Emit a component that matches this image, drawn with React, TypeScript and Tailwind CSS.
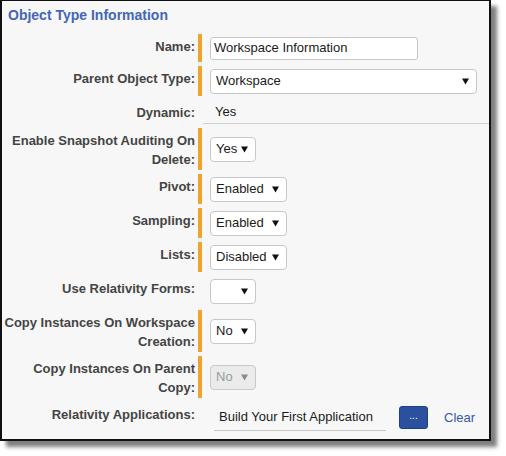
const font = { fontFamily: '"Liberation Sans", Arial, sans-serif' };

type Row = {
  label: string[];
  required: boolean;
  h: string;
  control: React.ReactNode;
};

function Caret({ disabled }: { disabled?: boolean }) {
  return (
    <svg width="7" height="7" viewBox="0 0 7 7" className="shrink-0">
      <path d="M0 0.5 L7 0.5 L3.5 6.5 Z" fill={disabled ? '#8a8a8a' : '#111'} />
    </svg>
  );
}

function Select({ value, width, disabled }: { value: string; width: string; disabled?: boolean }) {
  return (
    <div
      className={`${width} h-[25px] flex items-center justify-between pl-[5px] pr-[7px] rounded-[4px] border border-[#c8c8c8] text-[13px] ${
        disabled ? 'bg-[#ebebeb] text-[#9a9a9a]' : 'bg-white text-[#1a1a1a]'
      }`}
    >
      <span>{value}</span>
      <Caret disabled={disabled} />
    </div>
  );
}

const rows: Row[] = [
  {
    label: ['Name:'],
    required: true,
    h: 'h-[28px]',
    control: (
      <div className="w-[208px] h-[23px] flex items-center pl-[3px] rounded-[3px] border border-[#c8c8c8] bg-white text-[13px] text-[#1a1a1a]">
        Workspace Information
      </div>
    ),
  },
  { label: ['Parent Object Type:'], required: true, h: 'h-[30px]', control: <Select value="Workspace" width="w-[267px]" /> },
  {
    label: ['Dynamic:'],
    required: false,
    h: 'h-[24px]',
    control: <span className="pl-[4px] text-[13px] text-[#1a1a1a]">Yes</span>,
  },
  {
    label: ['Enable Snapshot Auditing On', 'Delete:'],
    required: true,
    h: 'h-[42px]',
    control: <Select value="Yes" width="w-[46px]" />,
  },
  { label: ['Pivot:'], required: true, h: 'h-[30px]', control: <Select value="Enabled" width="w-[77px]" /> },
  { label: ['Sampling:'], required: true, h: 'h-[30px]', control: <Select value="Enabled" width="w-[77px]" /> },
  { label: ['Lists:'], required: true, h: 'h-[30px]', control: <Select value="Disabled" width="w-[77px]" /> },
  { label: ['Use Relativity Forms:'], required: false, h: 'h-[30px]', control: <Select value="" width="w-[46px]" /> },
  {
    label: ['Copy Instances On Workspace', 'Creation:'],
    required: true,
    h: 'h-[42px]',
    control: <Select value="No" width="w-[46px]" />,
  },
  {
    label: ['Copy Instances On Parent', 'Copy:'],
    required: true,
    h: 'h-[42px]',
    control: <Select value="No" width="w-[46px]" disabled />,
  },
  {
    label: ['Relativity Applications:'],
    required: false,
    h: 'h-[31px]',
    control: (
      <div className="flex items-center">
        <div className="ml-[4px] w-[172px] h-[27px] flex items-center pl-[5px] border-b border-[#c8c8c8] text-[13px] text-[#1a1a1a]">
          Build Your First Application
        </div>
        <button className="ml-[13px] w-[29px] h-[23px] rounded-[3px] bg-[#2b50a0] border border-[#1f3f85] text-white text-[10px] leading-none pb-[3px]">
          ...
        </button>
        <span className="ml-[16px] text-[13px] text-[#3558a8]">Clear</span>
      </div>
    ),
  },
];

export default function App() {
  return (
    <div className="w-[506px] h-[456px] bg-white" style={font}>
      <div className="w-[491px] h-[441px] bg-[#f7f7f7] border-2 border-t border-[#111] shadow-[6px_6px_4px_rgba(0,0,0,0.5)]">
        <div className="pl-[6px] pt-[4px] h-[33px] text-[14px] font-bold text-[#4466b5]">Object Type Information</div>
        <div className="flex flex-col gap-[4px]">
          {rows.map((row, i) => (
            <div key={i} className={`flex ${row.h}`}>
              <div className="w-[196px] shrink-0 pr-[3px] pt-[3px] text-right text-[13px] font-bold leading-[19px] text-[#444]">
                {row.label.map((l) => (
                  <div key={l}>{l}</div>
                ))}
              </div>
              <div className={`w-[4px] shrink-0 ${row.required ? 'bg-[#f0a22e]' : ''}`} />
              <div
                className={`flex-1 flex items-center pl-[8px] ${
                  row.label[0] === 'Dynamic:' ? 'border-b border-[#cfcfcf] ml-[1px] pl-[7px]' : ''
                }`}
              >
                {row.control}
              </div>
            </div>
          ))}
        </div>
      </div>
    </div>
  );
}
